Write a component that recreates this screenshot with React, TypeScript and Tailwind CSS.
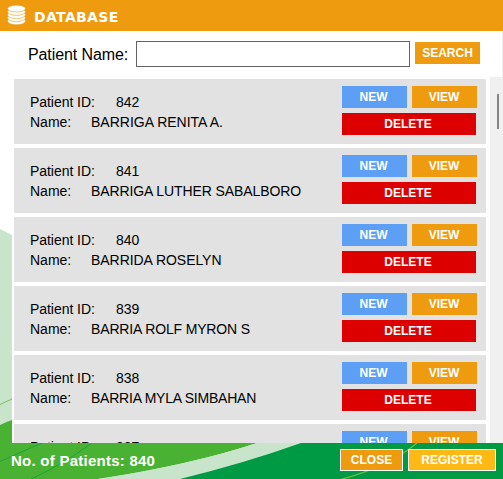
const patients = [
  { id: 842, name: 'BARRIGA RENITA A.', tracking: 'tracking-normal' },
  { id: 841, name: 'BARRIGA LUTHER SABALBORO', tracking: 'tracking-[-0.1px]' },
  { id: 840, name: 'BARRIDA ROSELYN', tracking: 'tracking-[-0.05px]' },
  { id: 839, name: 'BARRIA ROLF MYRON S', tracking: 'tracking-[-0.15px]' },
  { id: 838, name: 'BARRIA MYLA SIMBAHAN', tracking: 'tracking-[-0.23px]' },
  { id: 837, name: '', tracking: 'tracking-normal' },
];

function DatabaseIcon() {
  return (
    <svg width="19" height="21" viewBox="0 0 19 21" fill="#fff" stroke="#ef9b0f" strokeWidth="0.6">
      <ellipse cx="9.5" cy="15.900" rx="9" ry="3.900" />
      <ellipse cx="9.5" cy="12.800" rx="9" ry="3.900" />
      <ellipse cx="9.5" cy="9.700" rx="9" ry="3.900" />
      <ellipse cx="9.5" cy="6.700" rx="9" ry="3.700" />
      <ellipse cx="9.5" cy="3.600" rx="9" ry="3.400" />
    </svg>
  );
}

function Backdrop() {
  return (
    <svg className="absolute inset-0 -z-10" width="503" height="479" viewBox="0 0 503 479" fill="none">
      <path d="M0 229L12 235L503 443V479H0z" fill="#c8e4cb" />
      <path d="M0 404.500L12 399" stroke="#7cc05a" />
      <path d="M0 425Q6 422 12 420L60 443H257Q190 465 98 479H0z" fill="#4ab232" />
      <path d="M0 461.500L44 442M31 479Q66 463 93 442" stroke="#1fa23a" />
      <path d="M257 443H301Q245 463 180 479H98Q190 465 257 443z" fill="#c8e4cb" />
      <path d="M301 443H503V479H180Q245 463 301 443z" fill="#009a44" />
      <path d="M342 479Q388 467 417 443" stroke="#6cbf3e" strokeWidth="1.2" />
    </svg>
  );
}

function PatientCard({ id, name, tracking }: { id: number; name: string; tracking: string }) {
  return (
    <div className="flex h-[65px] w-[472px] shrink-0 bg-[#e2e2e2] pl-4">
      <div className="w-[312px] shrink-0 pt-[13px] text-[14px] leading-5 whitespace-nowrap">
        <div className="flex">
          <span className="w-[86px] tracking-[-0.05px]">Patient ID:</span>
          <span>{id}</span>
        </div>
        <div className="flex">
          <span className="w-[61px]">Name:</span>
          <span className={tracking}>{name}</span>
        </div>
      </div>
      <div className="flex w-[135px] shrink-0 flex-wrap content-start gap-[5px] pt-[7px] text-[12px] leading-[22px] font-bold text-white">
        <button className="h-[22px] w-[65px] bg-[#5c9ff5] pr-[2px]">NEW</button>
        <button className="h-[22px] w-[65px] bg-[#ef9b0f] pr-px">VIEW</button>
        <button className="h-[22px] w-[134px] bg-[#dc0000] pr-[2px]">DELETE</button>
      </div>
    </div>
  );
}

export default function App() {
  return (
    <div className="relative isolate flex h-[479px] w-[503px] flex-col overflow-hidden bg-white font-['Liberation_Sans',Arial,sans-serif] text-black">
      <Backdrop />
      <header className="flex h-[31px] shrink-0 items-start bg-[#ef9b0f] pt-[5px] pl-[7px]">
        <DatabaseIcon />
        <h1 className="ml-2 pt-[2px] font-['DejaVu_Sans',sans-serif] text-[14px] leading-5 font-bold tracking-[0.35px] text-white">DATABASE</h1>
      </header>
      <div className="flex h-[46px] shrink-0 border-r border-[#f0f0f0] pt-[10px] pl-7">
        <label className="w-[108px] text-[16px] leading-[27px] tracking-[-0.1px] whitespace-nowrap">Patient Name:</label>
        <input className="h-[26px] w-[274px] border border-[#646464] bg-white" />
        <button className="mt-px ml-[5px] h-[22px] w-[65px] bg-[#ef9b0f] text-[12px] leading-[22px] font-bold text-white">SEARCH</button>
      </div>
      <main className="ml-3 flex min-h-0 flex-1 justify-between bg-white">
        <div className="flex flex-col gap-1 overflow-hidden pt-[2px] pl-[2px]">
          {patients.map((p) => (
            <PatientCard key={p.id} id={p.id} name={p.name} tracking={p.tracking} />
          ))}
        </div>
        <div className="w-[13px] bg-[#f0f0f0] pt-[17px] pl-[7px]">
          <div className="h-[35px] w-[2px] bg-[#858585]" />
        </div>
      </main>
      <footer className="flex h-9 shrink-0 pt-[6px] pl-[11px] text-white">
        <p className="w-[329px] text-[15px] leading-[23px] font-bold tracking-[0.25px] whitespace-nowrap">No. of Patients: 840</p>
        <button className="h-[22px] w-[63px] border border-white bg-[#ef9b0f] text-[12px] leading-5 font-bold">CLOSE</button>
        <button className="ml-[5px] h-[22px] w-[88px] border border-white bg-[#ffb914] text-[12px] leading-5 font-bold">REGISTER</button>
      </footer>
    </div>
  );
}
